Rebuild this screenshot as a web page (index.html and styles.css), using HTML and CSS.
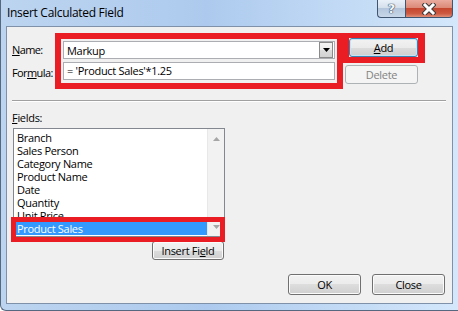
FILE: index.html
```html
<!DOCTYPE html>
<html>
<head>
<meta charset="utf-8">
<link rel="stylesheet" href="styles.css">
</head>
<body>
<div class="window">
  <div class="titlebar">
    <span class="title">Insert Calculated Field</span>
    <div class="caption-btns">
      <div class="cap help"><span>?</span></div>
      <div class="cap close">
        <svg width="14" height="12" viewBox="0 0 14 12">
          <path d="M3 2 L11 10 M11 2 L3 10" stroke="#3b3b3b" stroke-width="5" stroke-linecap="square" fill="none"/>
          <path d="M3 2 L11 10 M11 2 L3 10" stroke="#ffffff" stroke-width="3" stroke-linecap="square" fill="none"/>
        </svg>
      </div>
    </div>
  </div>
  <div class="client">
    <div class="top">
      <div class="labels">
        <span class="lbl name-lbl"><u>N</u>ame:</span>
        <span class="lbl formula-lbl">For<u>m</u>ula:</span>
      </div>
      <div class="hl inputs">
        <div class="combo">
          <span>Markup</span>
          <span class="drop"><svg width="7" height="4" viewBox="0 0 7 4"><polygon points="0,0 7,0 3.5,4" fill="#000"/></svg></span>
        </div>
        <div class="textbox">= 'Product Sales'*1.25</div>
      </div>
      <div class="actions">
        <div class="hl add-hl"><button class="btn default add"><u>A</u>dd</button></div>
        <button class="btn disabled delete">Delete</button>
      </div>
    </div>
    <div class="sep"></div>
    <div class="fields">
      <span class="lbl fields-lbl"><u>F</u>ields:</span>
      <div class="listbox">
        <ul class="items">
          <li>Branch</li>
          <li>Sales Person</li>
          <li>Category Name</li>
          <li>Product Name</li>
          <li>Date</li>
          <li>Quantity</li>
          <li>Unit Price</li>
          <li class="sel">Product Sales</li>
        </ul>
        <div class="vscroll">
          <svg width="7" height="4" viewBox="0 0 7 4"><polygon points="0,4 7,4 3.5,0" fill="#a6a6a6"/></svg>
          <svg width="7" height="4" viewBox="0 0 7 4"><polygon points="0,0 7,0 3.5,4" fill="#a6a6a6"/></svg>
        </div>
        <div class="hl-overlay"></div>
      </div>
      <button class="btn insert">Insert Fi<u>e</u>ld</button>
    </div>
    <div class="bottom">
      <button class="btn big">OK</button>
      <button class="btn big">Close</button>
    </div>
  </div>
</div>
</body>
</html>
```
FILE: styles.css
```css
* { box-sizing: border-box; }
body {
  margin: 0;
  font-family: "Open Sans", "Noto Sans", sans-serif;
  font-size: 11px;
  letter-spacing: -0.3px;
  color: #000;
}
.window {
  width: 458px;
  height: 311px;
  display: flex;
  flex-direction: column;
  background: linear-gradient(to right, #bcd4ef 0%, #adcaee 45%, #c2daf5 75%, #d4e7fb 100%);
  border-left: 1px solid #56687f;
  border-bottom: 1px solid #56687f;
  border-bottom-left-radius: 6px;
  padding: 0 5px 6px 5px;
  overflow: hidden;
}
.titlebar {
  height: 26px;
  flex: none;
  display: flex;
  justify-content: space-between;
  align-items: flex-start;
}
.title {
  line-height: 26px;
  font-size: 12px;
  padding-left: 1px;
  color: #000;
}
.caption-btns { display: flex; }
.cap {
  height: 18px;
  border: 1px solid #3f5570;
  border-top: none;
  display: flex;
  align-items: center;
  justify-content: center;
}
.help {
  width: 28px;
  border-right: none;
  border-radius: 0 0 0 4px;
  background: linear-gradient(#e9f0f8 0%, #d5e0ed 45%, #b4c6dc 50%, #c9d8ea 100%);
}
.help span {
  font-family: "DejaVu Sans", sans-serif;
  font-weight: bold;
  font-size: 13px;
  line-height: 16px;
  letter-spacing: 0;
  color: #f4f6f8;
  text-shadow: 0 0 1px #33475f, 0 0 1px #33475f, 0 0 1px #33475f;
}
.close {
  width: 48px;
  border-radius: 0 0 4px 0;
  background: linear-gradient(#eaab9e 0%, #dc8a78 45%, #c5472f 50%, #cd5a42 80%, #e08f78 100%);
}
.client {
  height: 278px;
  flex: none;
  border: 1px solid #7f91a8;
  background: #f0f0f0;
  display: flex;
  flex-direction: column;
}
.top {
  display: flex;
  padding: 6px 0 0 5px;
}
.labels {
  width: 43px;
  display: flex;
  flex-direction: column;
  letter-spacing: -0.6px;
}
.lbl { line-height: 18px; white-space: nowrap; }
.name-lbl { margin-top: 8px; }
.formula-lbl { margin-top: 5px; }
.hl { border: 6px solid #ea1c24; }
.inputs {
  width: 288px;
  padding: 2px 2px 3px 2px;
  display: flex;
  flex-direction: column;
  gap: 3px;
}
.combo {
  height: 18px;
  border: 1px solid #abadb3;
  background: #fff;
  display: flex;
  align-items: center;
  justify-content: space-between;
  padding-left: 3px;
}
.drop {
  width: 14px;
  height: 16px;
  margin-right: 1px;
  border: 1px solid #8a8a8a;
  background: linear-gradient(#f4f4f4 0%, #ececec 50%, #dcdcdc 50%, #d2d2d2 100%);
  display: flex;
  align-items: center;
  justify-content: center;
}
.textbox {
  height: 18px;
  border: 1px solid #abadb3;
  background: #fff;
  padding-left: 3px;
  line-height: 16px;
}
.actions {
  display: flex;
  flex-direction: column;
  align-items: flex-start;
}
.add-hl { border-width: 5px 7px 6px 6px; }
.btn {
  font: inherit;
  font-size: 11px;
  letter-spacing: -0.3px;
  color: #000;
  border: 1px solid #707070;
  border-radius: 3px;
  background: linear-gradient(#f2f2f2 0%, #ebebeb 50%, #dddddd 50%, #cfcfcf 100%);
  box-shadow: inset 0 0 0 1px #fbfbfb;
  padding: 0;
  display: block;
  line-height: 15px;
}
.add { width: 69px; height: 19px; }
.default {
  border-color: #3c7fb1;
  box-shadow: inset 0 0 0 1px #c4e5f6;
}
.disabled {
  border-color: #adb2b5;
  background: #f4f4f4;
  color: #838383;
  box-shadow: none;
}
.delete { width: 73px; height: 19px; margin: 2px 0 0 2px; }
.sep {
  margin: 11px 6px 0 5px;
  border-top: 1px solid #a0a0a0;
  border-bottom: 1px solid #ffffff;
}
.fields {
  width: 218px;
  padding-left: 5px;
  display: flex;
  flex-direction: column;
}
.fields-lbl { line-height: 14px; margin-top: 9px; }
.listbox {
  position: relative;
  margin: 3px 0 0 1px;
  width: 212px;
  height: 109px;
  border: 1px solid #828790;
  background: #fff;
  display: flex;
}
.items {
  list-style: none;
  margin: 0;
  padding: 2px 0 0 2px;
  flex: 1;
}
.items li {
  line-height: 13px;
  height: 13px;
  padding-left: 1px;
  white-space: nowrap;
}
.items .sel { background: #3399ff; color: #fff; }
.vscroll {
  width: 17px;
  background: #f2f2f2;
  border-left: 1px solid #e8e8e8;
  display: flex;
  flex-direction: column;
  justify-content: space-between;
  align-items: center;
  padding: 8px 0 7px 0;
}
.hl-overlay {
  position: absolute;
  left: -3px;
  top: 88px;
  width: 214px;
  height: 25px;
  border: 5px solid #ea1c24;
}
.insert {
  align-self: flex-end;
  margin: 4px 1px 0 0;
  width: 72px;
  height: 19px;
}
.bottom {
  margin-top: auto;
  display: flex;
  justify-content: flex-end;
  gap: 11px;
  padding: 0 7px 8px 0;
}
.big { width: 73px; height: 21px; }
```
